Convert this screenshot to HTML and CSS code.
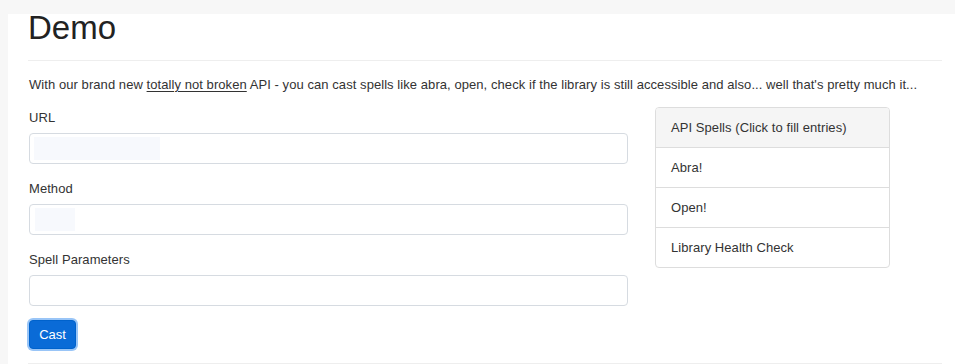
FILE: index.html
```html
<!DOCTYPE html>
<html lang="en">
<head>
  <meta charset="UTF-8">
  <title>Demo</title>
  <link rel="stylesheet" href="styles.css">
</head>
<body>
  <div class="page">
    <h1>Demo</h1>
    <hr>
    <p class="intro">With our brand new <u>totally not broken</u> API - you can cast spells like abra, open, check if the library is still accessible and also... well that's pretty much it...</p>
    <div class="row">
      <form class="spell-form">
        <div class="form-group">
          <label for="url">URL</label>
          <input type="text" id="url" class="form-control filled-url">
        </div>
        <div class="form-group">
          <label for="method">Method</label>
          <input type="text" id="method" class="form-control filled-method">
        </div>
        <div class="form-group">
          <label for="params">Spell Parameters</label>
          <input type="text" id="params" class="form-control">
        </div>
        <button type="button" class="btn-cast">Cast</button>
      </form>
      <div class="list-group">
        <div class="list-header">API Spells (Click to fill entries)</div>
        <div class="list-item">Abra!</div>
        <div class="list-item">Open!</div>
        <div class="list-item">Library Health Check</div>
      </div>
    </div>
    <hr class="bottom">
  </div>
</body>
</html>
```

FILE: styles.css
```css
body {
  margin: 0;
  background-color: #f7f7f7;
  color: #333;
  font-family: "Liberation Sans", Arial, sans-serif;
  font-size: 13px;
  line-height: 20px;
  letter-spacing: 0.065px;
}
.page {
  margin: 14px 0 0 8px;
  padding: 0 13px 0 20px;
  background-color: #fff;
  min-height: 400px;
}
h1 {
  margin: 0;
  padding-top: 2px;
  font-size: 33px;
  font-weight: 400;
  line-height: 24px;
  letter-spacing: 0;
  color: #222;
}
hr {
  margin: 20px 0 0;
  border: none;
  border-top: 1px solid #eee;
}
.intro {
  margin: 14px 0 12px 1px;
}
.intro u {
  text-underline-offset: 2px;
}
.row {
  display: grid;
  grid-template-columns: 600px 235px;
  column-gap: 27px;
  align-items: start;
}
.spell-form {
  padding: 1px 0 0 1px;
}
.form-group {
  margin-bottom: 15px;
}
.form-group label {
  display: block;
  margin-bottom: 5px;
}
.form-control {
  display: block;
  box-sizing: border-box;
  width: 100%;
  height: 31px;
  margin: 0;
  padding: 5px 12px;
  border: 1px solid #d6dbe1;
  border-radius: 4px;
  background-color: #fff;
  font-family: inherit;
  font-size: 13px;
  color: #333;
}
.filled-url {
  background: #fff linear-gradient(#f7f9fd, #f7f9fd) no-repeat 4px 3px / 126px 23px;
}
.filled-method {
  background: #fff linear-gradient(#f7f9fd, #f7f9fd) no-repeat 5px 3px / 40px 23px;
}
.btn-cast {
  display: block;
  box-sizing: border-box;
  width: 47px;
  height: 29px;
  margin-top: -1px;
  padding: 0;
  border: 1px solid #0062cc;
  border-radius: 4px;
  background-color: #0a6bd7;
  color: #fff;
  font-family: inherit;
  font-size: 13px;
  box-shadow: 0 0 0 2px rgba(70, 150, 240, 0.55);
  cursor: pointer;
}
.list-group {
  border: 1px solid #ddd;
  border-radius: 4px;
  overflow: hidden;
}
.list-header, .list-item {
  padding: 10px 15px;
  line-height: 19px;
}
.list-header {
  background-color: #f5f5f5;
}
.list-item {
  border-top: 1px solid #ddd;
  cursor: pointer;
}
hr.bottom {
  margin-top: 14px;
}
```
